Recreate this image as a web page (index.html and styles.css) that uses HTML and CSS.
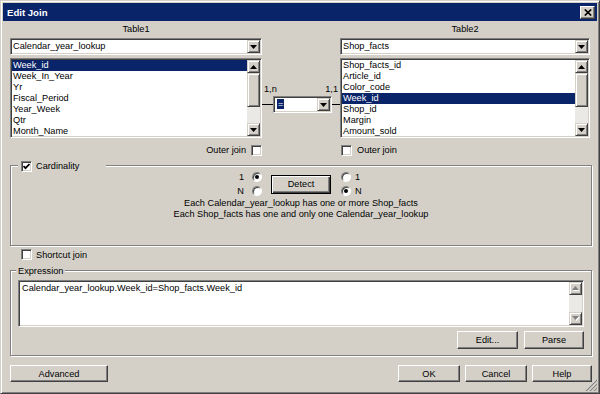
FILE: index.html
```html
<!DOCTYPE html>
<html>
<head>
<meta charset="utf-8">
<title>Edit Join</title>
<link rel="stylesheet" href="styles.css">
</head>
<body>
<div class="window">
  <div class="titlebar">
    <span class="title">Edit Join</span>
    <span class="close raised"><svg width="8" height="7" viewBox="0 0 8 7"><path d="M0.8 0.5 L7.2 6.5 M7.2 0.5 L0.8 6.5" stroke="#000" stroke-width="1.7"/></svg></span>
  </div>
  <div class="content">
    <div class="tables">
      <div class="tcol">
        <div class="tlabel">Table1</div>
        <div class="combo"><span class="combo-text">Calendar_year_lookup</span><span class="dd raised"><svg width="7" height="4" viewBox="0 0 7 4"><polygon points="0,0 7,0 3.5,4" fill="#000"/></svg></span></div>
        <div class="listbox">
          <ul class="items">
            <li class="sel">Week_id</li>
            <li>Week_In_Year</li>
            <li>Yr</li>
            <li>Fiscal_Period</li>
            <li>Year_Week</li>
            <li>Qtr</li>
            <li>Month_Name</li>
          </ul>
          <div class="vscroll">
            <span class="sbtn raised"><svg width="7" height="4" viewBox="0 0 7 4"><polygon points="0,4 7,4 3.5,0" fill="#000"/></svg></span>
            <span class="thumb raised"></span>
            <span class="track"></span>
            <span class="sbtn raised"><svg width="7" height="4" viewBox="0 0 7 4"><polygon points="0,0 7,0 3.5,4" fill="#000"/></svg></span>
          </div>
        </div>
        <div class="chk-row end">Outer join <span class="checkbox"></span></div>
      </div>
      <div class="mid">
        <div class="card-labels"><span>1,n</span><span>1,1</span></div>
        <div class="op-row">
          <span class="wire w-left"></span>
          <div class="combo small"><span class="combo-text"><span class="op-sel">=</span></span><span class="dd raised"><svg width="7" height="4" viewBox="0 0 7 4"><polygon points="0,0 7,0 3.5,4" fill="#000"/></svg></span></div>
          <span class="wire w-right"></span>
        </div>
      </div>
      <div class="tcol">
        <div class="tlabel">Table2</div>
        <div class="combo"><span class="combo-text">Shop_facts</span><span class="dd raised"><svg width="7" height="4" viewBox="0 0 7 4"><polygon points="0,0 7,0 3.5,4" fill="#000"/></svg></span></div>
        <div class="listbox">
          <ul class="items">
            <li>Shop_facts_id</li>
            <li>Article_id</li>
            <li>Color_code</li>
            <li class="sel">Week_id</li>
            <li>Shop_id</li>
            <li>Margin</li>
            <li>Amount_sold</li>
          </ul>
          <div class="vscroll">
            <span class="sbtn raised"><svg width="7" height="4" viewBox="0 0 7 4"><polygon points="0,4 7,4 3.5,0" fill="#000"/></svg></span>
            <span class="thumb raised"></span>
            <span class="track"></span>
            <span class="sbtn raised"><svg width="7" height="4" viewBox="0 0 7 4"><polygon points="0,0 7,0 3.5,4" fill="#000"/></svg></span>
          </div>
        </div>
        <div class="chk-row start"><span class="checkbox"></span>Outer join</div>
      </div>
    </div>

    <div class="group cardinality">
      <div class="legend legend-chk"><span class="checkbox"><svg width="7" height="7" viewBox="0 0 7 7"><polyline points="0.5,3 2.5,5.2 6.5,1" fill="none" stroke="#000" stroke-width="1.8"/></svg></span>Cardinality</div>
      <div class="radios">
        <div class="rcol left">
          <div class="rrow">1 <span class="radio"><span class="dot"></span></span></div>
          <div class="rrow">N <span class="radio"></span></div>
        </div>
        <button class="btn default">Detect</button>
        <div class="rcol right">
          <div class="rrow"><span class="radio"></span>1</div>
          <div class="rrow"><span class="radio"><span class="dot"></span></span>N</div>
        </div>
      </div>
      <p class="desc">Each Calendar_year_lookup has one or more Shop_facts<br>Each Shop_facts has one and only one Calendar_year_lookup</p>
    </div>

    <div class="chk-row shortcut"><span class="checkbox"></span>Shortcut join</div>

    <div class="group expression">
      <div class="legend legend-text">Expression</div>
      <div class="textarea">
        <div class="ta-text">Calendar_year_lookup.Week_id=Shop_facts.Week_id</div>
        <div class="vscroll">
          <span class="sbtn raised"><svg width="7" height="5" viewBox="0 0 7 5"><polygon points="1,5 8,5 4.5,1" fill="#fff"/><polygon points="0,4 7,4 3.5,0" fill="#808080"/></svg></span>
          <span class="track"></span>
          <span class="sbtn raised"><svg width="8" height="5" viewBox="0 0 8 5"><polygon points="1,1 8,1 4.5,5" fill="#fff"/><polygon points="0,0 7,0 3.5,4" fill="#808080"/></svg></span>
        </div>
      </div>
      <div class="expr-btns">
        <button class="btn b-edit">Edit...</button>
        <button class="btn b-parse">Parse</button>
      </div>
    </div>

    <div class="footer">
      <button class="btn b-adv">Advanced</button>
      <div class="footer-right">
        <button class="btn b-ok">OK</button>
        <button class="btn b-cancel">Cancel</button>
        <button class="btn b-help">Help</button>
      </div>
    </div>
  </div>
  <svg class="grip" width="12" height="12" viewBox="0 0 12 12">
    <path d="M11 1 L1 11 M11 5 L5 11 M11 9 L9 11" stroke="#fff" stroke-width="1"/>
    <path d="M12 1 L1 12 M12 5 L5 12 M12 9 L9 12" stroke="#808080" stroke-width="1.2"/>
  </svg>
</div>
</body>
</html>
```

FILE: styles.css
```css
* { box-sizing: border-box; }

body {
  margin: 0;
  background: #d4d0c8;
  font-family: "Liberation Sans", Arial, sans-serif;
  font-size: 9.2px;
  color: #000;
}

.window {
  width: 600px;
  height: 394px;
  position: relative;
  background: #d4d0c8;
  border: 1px solid;
  border-color: #d4d0c8 #404040 #404040 #d4d0c8;
  box-shadow: inset 1px 1px #fff, inset -1px -1px #808080;
  padding: 2px;
  display: flex;
  flex-direction: column;
}

.raised {
  background: #d4d0c8;
  border: 1px solid;
  border-color: #d4d0c8 #404040 #404040 #d4d0c8;
  box-shadow: inset 1px 1px #fff, inset -1px -1px #808080;
  display: flex;
  align-items: center;
  justify-content: center;
}

.titlebar {
  height: 18px;
  background: #0a246a;
  color: #fff;
  display: flex;
  align-items: center;
  justify-content: space-between;
  padding: 0 2px 0 4px;
}

.title {
  font-weight: bold;
  font-size: 9.6px;
}

.close {
  width: 15px;
  height: 13px;
  border-color: #fff #404040 #404040 #fff;
  box-shadow: inset -1px -1px #808080;
}

.content {
  flex: 1;
  padding: 3px 5px 0 7px;
  display: flex;
  flex-direction: column;
}

.tables {
  display: grid;
  grid-template-columns: 252px 78px 250px;
}

.tcol {
  display: flex;
  flex-direction: column;
}

.tlabel {
  height: 11px;
  line-height: 11px;
  text-align: center;
}

.combo {
  margin-top: 3px;
  height: 17px;
  background: #fff;
  border: 1px solid;
  border-color: #808080 #fff #fff #808080;
  box-shadow: inset 1px 1px #404040, inset -1px -1px #d4d0c8;
  padding: 1px;
  display: flex;
  align-items: center;
}

.combo-text {
  flex: 1;
  padding-left: 1px;
  line-height: 13px;
  white-space: nowrap;
  overflow: hidden;
}

.dd {
  width: 13px;
  height: 13px;
}

.listbox {
  margin-top: 3px;
  height: 80px;
  background: #fff;
  border: 1px solid;
  border-color: #808080 #fff #fff #808080;
  box-shadow: inset 1px 1px #404040, inset -1px -1px #d4d0c8;
  padding: 1px;
  display: flex;
}

.items {
  list-style: none;
  margin: 0;
  padding: 0;
  flex: 1;
  overflow: hidden;
}

.items li {
  height: 11px;
  line-height: 11px;
  padding-left: 1px;
  white-space: nowrap;
}

.items li.sel {
  background: #0a246a;
  color: #fff;
}

.vscroll {
  width: 13px;
  display: flex;
  flex-direction: column;
}

.sbtn {
  height: 13px;
  flex: none;
}

.thumb {
  height: 34px;
  flex: none;
}

.track {
  flex: 1;
  background: #ebe9e5;
}

.chk-row {
  display: flex;
  align-items: center;
  gap: 5px;
  height: 12px;
  margin-top: 6px;
}

.chk-row.end { justify-content: flex-end; }
.chk-row.start { padding-left: 1px; }

.checkbox {
  width: 11px;
  height: 11px;
  flex: none;
  background: #fff;
  border: 1px solid;
  border-color: #808080 #fff #fff #808080;
  box-shadow: inset 1px 1px #404040, inset -1px -1px #d4d0c8;
  display: flex;
  align-items: center;
  justify-content: center;
}

.mid {
  padding-top: 60px;
  display: flex;
  flex-direction: column;
}

.card-labels {
  display: flex;
  justify-content: space-between;
  padding: 0 2px;
  height: 11px;
  line-height: 11px;
}

.op-row {
  margin-top: 1px;
  display: flex;
  align-items: center;
  height: 17px;
}

.wire {
  height: 1px;
  background: #000;
}

.w-left { width: 11px; }
.w-right { width: 8px; }

.combo.small {
  margin-top: 0;
  width: 59px;
}

.op-sel {
  display: inline-block;
  margin-left: 1px;
  padding: 0 1px;
  line-height: 10px;
  background: #0a246a;
  color: #fff;
}

.group {
  position: relative;
  border: 1px solid #808080;
  box-shadow: 1px 1px 0 #fff, inset 1px 1px 0 #fff;
}

.legend {
  position: absolute;
  top: -6px;
  height: 12px;
  background: #d4d0c8;
  display: flex;
  align-items: center;
}

.legend-chk {
  left: 7px;
  width: 88px;
  padding-left: 3px;
  gap: 4px;
}

.legend-text {
  left: 5px;
  padding: 0 2px;
}

.cardinality {
  margin-top: 9px;
  height: 81px;
  padding-top: 4px;
}

.radios {
  display: grid;
  grid-template-columns: 1fr 60px 1fr;
  grid-template-rows: 14px 14px;
}

.rcol {
  grid-row: 1 / 3;
  display: flex;
  flex-direction: column;
}

.rcol.left {
  grid-column: 1;
  align-items: flex-end;
  padding-right: 9px;
}

.rcol.right {
  grid-column: 3;
  padding-left: 10px;
}

.rrow {
  height: 14px;
  display: flex;
  align-items: center;
  gap: 8px;
}

.rcol.right .rrow { gap: 4px; }

.radio {
  width: 10px;
  height: 10px;
  border-radius: 50%;
  background: #fff;
  border: 1px solid;
  border-color: #808080 #fff #fff #808080;
  box-shadow: inset 1px 1px #404040;
  display: flex;
  align-items: center;
  justify-content: center;
}

.dot {
  width: 4px;
  height: 4px;
  border-radius: 50%;
  background: #000;
}

.btn {
  font: inherit;
  color: #000;
  background: #d4d0c8;
  border: 1px solid;
  border-color: #fff #404040 #404040 #fff;
  box-shadow: inset -1px -1px #808080;
  padding: 0;
  margin: 0;
}

.btn.default {
  grid-column: 2;
  grid-row: 1 / 3;
  align-self: center;
  height: 19px;
  border-color: #000;
  box-shadow: inset 1px 1px #fff, inset -1px -1px #404040, inset -2px -2px #808080;
}

.desc {
  margin: 0;
  text-align: center;
  line-height: 11px;
}

.shortcut {
  margin-top: 3px;
  padding-left: 11px;
  gap: 4px;
  height: 11px;
}

.expression {
  margin-top: 10px;
  height: 86px;
  padding: 9px 7px 0 7px;
}

.textarea {
  height: 47px;
  background: #fff;
  border: 1px solid;
  border-color: #808080 #fff #fff #808080;
  box-shadow: inset 1px 1px #404040, inset -1px -1px #d4d0c8;
  padding: 1px;
  display: flex;
}

.ta-text {
  flex: 1;
  padding: 1px 0 0 2px;
  line-height: 11px;
}

.expr-btns {
  display: flex;
  justify-content: flex-end;
  gap: 6px;
  margin-top: 4px;
}

.b-edit { width: 61px; height: 18px; }
.b-parse { width: 60px; height: 18px; }

.footer {
  margin-top: 9px;
  display: flex;
  justify-content: space-between;
}

.footer-right {
  display: flex;
  gap: 5px;
}

.footer .btn { height: 17px; }
.b-adv { width: 98px; }
.b-ok { width: 62px; }
.b-cancel { width: 62px; }
.b-help { width: 60px; }

.grip {
  position: absolute;
  right: 2px;
  bottom: 2px;
}
```
